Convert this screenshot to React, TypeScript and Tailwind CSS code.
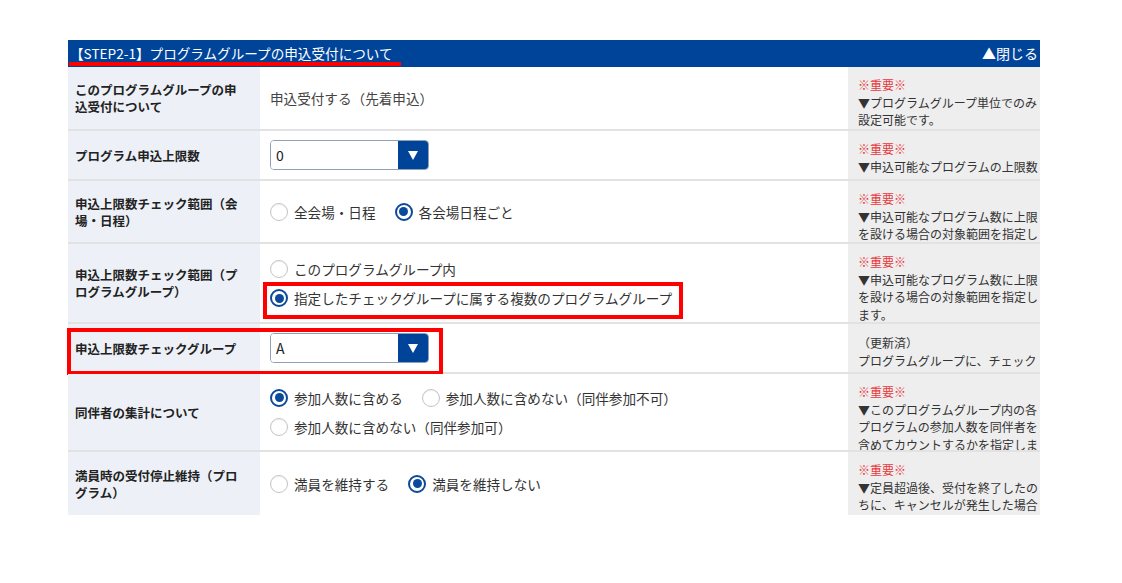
import React from 'react';

const BLUE = 'bg-[#00449a]';

function Radio({ checked }: { checked?: boolean }) {
  if (checked) {
    return (
      <span className="w-[18px] h-[18px] rounded-full border-2 border-[#0b4a98] flex items-center justify-center shrink-0 bg-white">
        <span className="w-[9px] h-[9px] rounded-full bg-[#0b4a98]" />
      </span>
    );
  }
  return <span className="w-[18px] h-[18px] rounded-full border border-[#c4c4c4] shrink-0 bg-white shadow-[inset_0_1px_1px_rgba(0,0,0,0.06)]" />;
}

function Option({ label, checked }: { label: string; checked?: boolean }) {
  return (
    <span className="flex items-center gap-[6px] text-[13.6px] text-[#333] leading-[20px]">
      <Radio checked={checked} />
      <span>{label}</span>
    </span>
  );
}

function Select({ value }: { value: string }) {
  return (
    <div className="flex w-[159px] h-[30px] rounded-[4px] border border-[#8da0b8] overflow-hidden">
      <div className="flex-1 bg-white pl-[5px] flex items-center text-[14px] text-[#222]">{value}</div>
      <div className={`w-[30px] ${BLUE} flex items-center justify-center`}>
        <svg width="10" height="9" viewBox="0 0 10 9">
          <path d="M0 0H10L5 9Z" fill="#fff" />
        </svg>
      </div>
    </div>
  );
}

const labelCls =
  'bg-[#edf1f7] pl-[7px] pr-[12px] flex items-center text-[12.5px] font-bold leading-[17px] text-[#222]';
const noteCls = 'bg-[#eeeeee] pl-[10px] pt-[9px] overflow-hidden text-[12px] leading-[17.5px] text-[#333]';

function Row({
  label,
  height,
  note,
  children,
  overlay,
}: {
  label: React.ReactNode;
  height: string;
  note: React.ReactNode;
  children: React.ReactNode;
  overlay?: React.ReactNode;
}) {
  return (
    <div className={`relative grid grid-cols-[192px_588px_192px] ${height} border-b-2 border-[#e2e2e2]`}>
      <div className={labelCls}>{label}</div>
      <div className="bg-white pl-[10px] flex flex-col justify-center">{children}</div>
      <div className={noteCls}>{note}</div>
      {overlay}
    </div>
  );
}

const Important = () => <div className="text-[#e8383d]">※重要※</div>;

export default function App() {
  return (
    <div className="min-h-screen bg-white pt-[40px] pl-[68px] font-['Noto_Sans_CJK_JP','Noto_Sans',sans-serif]">
      <div className="w-[972px]">
        {/* Header */}
        <div className={`relative h-[27px] ${BLUE} flex items-center justify-between pl-[2px] pr-[2px] text-white text-[13.6px]`}>
          <span>【STEP2-1】プログラムグループの申込受付について</span>
          <span className="text-[14px]">▲閉じる</span>
          <div className="absolute left-[1px] bottom-[1px] w-[332px] h-[4px] bg-[#ff0000]" />
        </div>

        <Row
          height="h-[64px]"
          label="このプログラムグループの申込受付について"
          note={
            <>
              <Important />
              <div>▼プログラムグループ単位でのみ設定可能です。</div>
            </>
          }
        >
          <span className="text-[13.6px] text-[#444]">申込受付する（先着申込）</span>
        </Row>

        <Row
          height="h-[50px]"
          label="プログラム申込上限数"
          note={
            <>
              <Important />
              <div className="whitespace-nowrap">▼申込可能なプログラムの上限数</div>
            </>
          }
        >
          <Select value="0" />
        </Row>

        <Row
          height="h-[63px]"
          label="申込上限数チェック範囲（会場・日程）"
          note={
            <>
              <Important />
              <div>▼申込可能なプログラム数に上限を設ける場合の対象範囲を指定します。</div>
            </>
          }
        >
          <div className="flex items-center gap-[19px]">
            <Option label="全会場・日程" />
            <Option label="各会場日程ごと" checked />
          </div>
        </Row>

        <Row
          height="h-[80px]"
          label="申込上限数チェック範囲（プログラムグループ）"
          note={
            <>
              <Important />
              <div>▼申込可能なプログラム数に上限を設ける場合の対象範囲を指定します。</div>
            </>
          }
          overlay={<div className="absolute left-[195px] top-[38px] w-[420px] h-[37px] border-4 border-[#ff0000]" />}
        >
          <div className="flex flex-col gap-[9px] pt-[1px]">
            <Option label="このプログラムグループ内" />
            <Option label="指定したチェックグループに属する複数のプログラムグループ" checked />
          </div>
        </Row>

        <Row
          height="h-[50px]"
          label="申込上限数チェックグループ"
          note={
            <div className="pt-[1px]">
              <div>（更新済）</div>
              <div className="h-[18px] overflow-hidden">プログラムグループに、チェックグループを設定します。</div>
            </div>
          }
          overlay={<div className="absolute left-[-1px] top-[4px] w-[376px] h-[47px] border-4 border-[#ff0000]" />}
        >
          <Select value="A" />
        </Row>

        <Row
          height="h-[78px]"
          label="同伴者の集計について"
          note={
            <>
              <Important />
              <div>▼このプログラムグループ内の各プログラムの参加人数を同伴者を含めてカウントするかを指定します。</div>
            </>
          }
        >
          <div className="flex flex-col gap-[9px]">
            <div className="flex items-center gap-[19px]">
              <Option label="参加人数に含める" checked />
              <Option label="参加人数に含めない（同伴参加不可）" />
            </div>
            <Option label="参加人数に含めない（同伴参加可）" />
          </div>
        </Row>

        <div className="grid grid-cols-[192px_588px_192px] h-[63px]">
          <div className={labelCls}>満員時の受付停止維持（プログラム）</div>
          <div className="bg-white pl-[10px] flex items-center gap-[19px]">
            <Option label="満員を維持する" />
            <Option label="満員を維持しない" checked />
          </div>
          <div className={noteCls}>
            <Important />
            <div>▼定員超過後、受付を終了したのちに、キャンセルが発生した場合</div>
          </div>
        </div>
      </div>
    </div>
  );
}
